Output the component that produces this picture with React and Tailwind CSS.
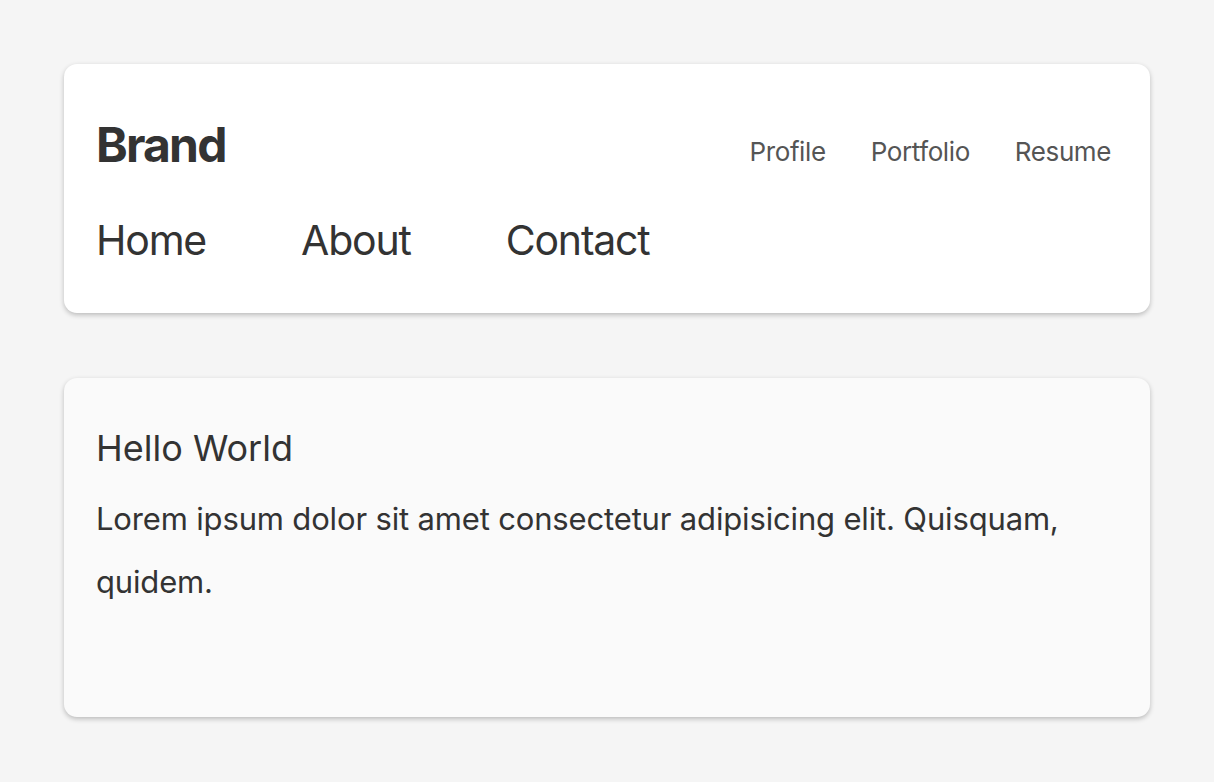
export default function App() {
  return (
    <div className="min-h-[782px] bg-[#f5f5f5] px-16 py-16 text-[#333]" style={{ fontFamily: 'Inter, "Noto Sans", sans-serif' }}>
      <div className="rounded-[13px] bg-white pl-8 pr-[39px] pt-[57px] pb-[52px] shadow-[0_2px_5px_rgba(0,0,0,0.24)]">
        <div className="flex items-end justify-between">
          <div className="text-[48px] font-bold leading-none tracking-[-1.8px]">Brand</div>
          <div className="flex gap-[45px] pb-[4px] text-[26px] leading-none tracking-[-0.4px] text-[#555]">
            <span>Profile</span>
            <span>Portfolio</span>
            <span>Resume</span>
          </div>
        </div>
        <div className="mt-[51px] flex gap-[95px] text-[41px] leading-none tracking-[-1.2px]">
          <span>Home</span>
          <span>About</span>
          <span>Contact</span>
        </div>
      </div>
      <div className="mt-[65px] h-[339px] rounded-[13px] bg-[#fafafa] px-8 pt-[52px] shadow-[0_2px_5px_rgba(0,0,0,0.24)]">
        <div className="text-[36px] leading-none">Hello World</div>
        <p className="mt-[21px] text-[31px] leading-[63px] tracking-[-0.16px]">
          Lorem ipsum dolor sit amet consectetur adipisicing elit. Quisquam, quidem.
        </p>
      </div>
    </div>
  );
}
